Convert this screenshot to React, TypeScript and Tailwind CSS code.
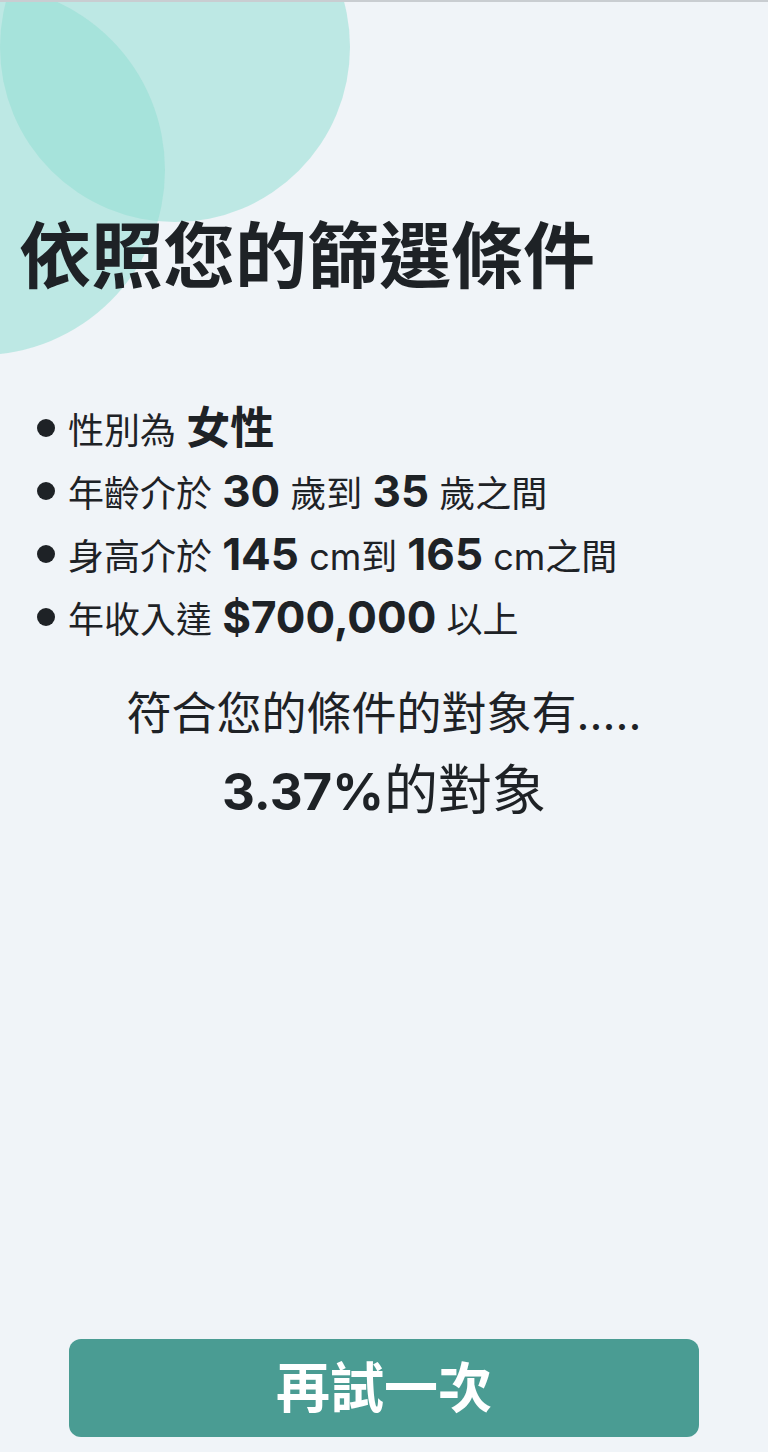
export default function App() {
  const rows = [
    { id: 1, parts: [["r", "性別為 "], ["b", "女性"]] },
    { id: 2, parts: [["r", "年齡介於 "], ["b", "30"], ["r", " 歲到 "], ["b", "35"], ["r", " 歲之間"]] },
    { id: 3, parts: [["r", "身高介於 "], ["b", "145"], ["r", " cm到 "], ["b", "165"], ["r", " cm之間"]] },
    { id: 4, parts: [["r", "年收入達 "], ["b", "$700,000"], ["r", " 以上"]] },
  ]

  return (
    <div className="relative h-[1452px] w-full overflow-hidden border-t-2 border-[#c9cdd1] bg-[#f0f4f8] font-['Inter','Noto_Sans_CJK_TC',sans-serif] text-[#1e2226]">
      {/* decorative circles */}
      <div className="absolute left-[0px] top-[-130px] h-[350px] w-[350px] rounded-full bg-[#94dfd4]/55" />
      <div className="absolute left-[-205px] top-[-17px] h-[370px] w-[370px] rounded-full bg-[#94dfd4]/55" />

      <div className="relative flex h-full flex-col">
        {/* Title */}
        <h1 className="pl-[19px] pt-[218px] text-[72px] font-bold leading-none">
          依照您的篩選條件
        </h1>

        {/* Criteria */}
        <ul className="mt-[104px] flex flex-col pl-[37px]">
          {rows.map((row) => (
            <li key={row.id} className="flex h-[63px] items-center">
              <span className="mr-[13px] h-[18px] w-[18px] shrink-0 rounded-full bg-[#1e2226]" />
              <span className="whitespace-pre">
                {row.parts.map(([kind, text], i) =>
                  kind === "b" ? (
                    <span key={i} className="text-[44px] font-bold">{text}</span>
                  ) : (
                    <span key={i} className="text-[36px]">{text}</span>
                  )
                )}
              </span>
            </li>
          ))}
        </ul>

        {/* Result */}
        <p className="mt-[43px] text-center text-[45px] leading-none">符合您的條件的對象有.....</p>
        <p className="mt-[28px] text-center leading-none">
          <span className="text-[51px] font-bold">3.37%</span>
          <span className="text-[54px]">的對象</span>
        </p>

        {/* Retry */}
        <div className="mt-auto px-[69px] pb-[15px]">
          <button className="flex h-[98px] w-full items-center justify-center rounded-[12px] bg-[#4a9c93] text-[54px] font-bold text-white">
            再試一次
          </button>
        </div>
      </div>
    </div>
  )
}
